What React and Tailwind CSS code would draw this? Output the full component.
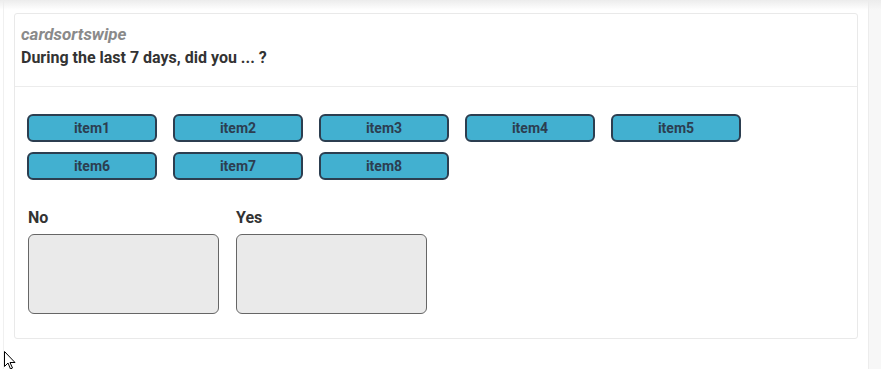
export default function App() {
    const items = ["item1", "item2", "item3", "item4", "item5", "item6", "item7", "item8"];
    const buckets = ["No", "Yes"];

    return (
        <div className="relative flex h-[369px] w-[881px] overflow-hidden bg-white font-['Roboto',sans-serif]">
            <div className="pointer-events-none absolute inset-x-0 top-0 h-[10px] bg-gradient-to-b from-[#ececec] to-white/0" />
            <div className="flex-1">
                <div className="ml-[3px] h-full border-l border-[#f0f0f0] pl-[10px] pr-[10px] pt-[13px]">
                    <div className="rounded-[3px] border border-[#e9e9e9] bg-white">
                        <div className="h-[73px] border-b border-[#ececec] px-[6px] pt-[10px]">
                            <div className="text-[17px] font-bold italic leading-[21px] text-[#8a8a8a]">cardsortswipe</div>
                            <div className="mt-[2px] text-[16px] font-bold leading-[21px] text-[#333]">During the last 7 days, did you ... ?</div>
                        </div>
                        <div className="px-[12px] pb-[24px] pt-[27px]">
                            <div className="flex max-w-[730px] flex-wrap gap-x-[16px] gap-y-[10px]">
                                {items.map(item => (
                                    <div key={item}
                                         className="flex h-[28px] w-[130px] items-center justify-center rounded-[6px] border-2 border-[#2c3e50] bg-[#42b0d0] text-[14px] font-bold text-[#2c3e50]">
                                        {item}
                                    </div>
                                ))}
                            </div>
                            <div className="mt-[28px] flex gap-[17px] pl-[1px]">
                                {buckets.map(label => (
                                    <div key={label} className="w-[191px]">
                                        <div className="text-[16px] font-bold leading-[20px] text-[#333]">{label}</div>
                                        <div className="mt-[6px] h-[80px] rounded-[6px] border border-[#666] bg-[#eaeaea]" />
                                    </div>
                                ))}
                            </div>
                        </div>
                    </div>
                </div>
            </div>
            <div className="w-[13px] border-l border-[#ececec] bg-[#f7f7f7]" />
            <svg className="absolute left-[4px] top-[351px]" width="12" height="19" viewBox="0 0 12 19">
                <path d="M0.5 0.5 L0.5 15.5 L4 12 L6.5 18 L8.5 17 L6 11.5 L11 11.5 Z" fill="white" stroke="black" strokeWidth="1" />
            </svg>
        </div>
    );
}
